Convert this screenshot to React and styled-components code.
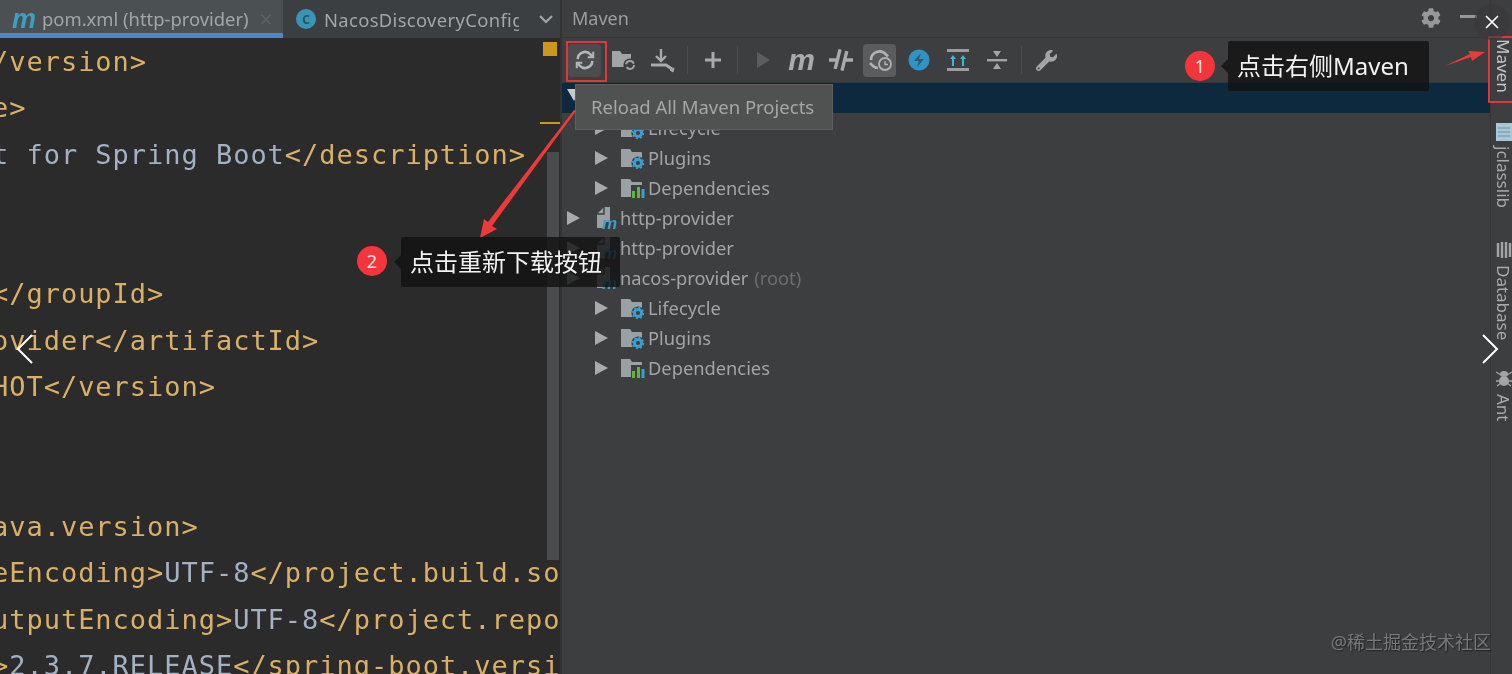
import React from 'react';
import styled, { createGlobalStyle } from 'styled-components';
import { FaCog, FaWrench } from 'react-icons/fa';

const GlobalStyle = createGlobalStyle`
  html, body { margin: 0; padding: 0; background: #3d3e40; overflow: hidden; }
`;

const Shot = styled.div`
  position: relative;
  display: flex;
  width: 1512px;
  height: 674px;
  overflow: hidden;
  font-family: "Noto Sans", "Noto Sans CJK SC", sans-serif;
`;

/* left side: editor */
const Editor = styled.div`
  display: flex;
  flex-direction: column;
  width: 560px;
  flex-shrink: 0;
  background: #2b2b2b;
  border-right: 2px solid #333436;
  filter: blur(0.6px);
`;

const TabBar = styled.div`
  display: flex;
  align-items: center;
  height: 38px;
  flex-shrink: 0;
  background: #3c3f41;
`;

const Tab = styled.div`
  display: flex;
  align-items: center;
  height: 38px;
  box-sizing: border-box;
  width: ${(p) => p.$width}px;
  padding-left: ${(p) => p.$pad}px;
  gap: 8px;
  overflow: hidden;
  white-space: nowrap;
  color: #a3a6a8;
  font-size: 18.4px;
  background: ${(p) => (p.$active ? '#4b5052' : 'transparent')};
  border-bottom: ${(p) => (p.$active ? '5px solid #4a88c7' : 'none')};
  padding-top: ${(p) => (p.$active ? '4px' : '0')};
`;

const TabLogo = styled.span`
  width: 22px;
  color: #3a9fc0;
  font-size: 27px;
  line-height: 20px;
  font-weight: 700;
  font-style: italic;
  font-family: "Liberation Sans", sans-serif;
`;

const TabClose = styled.span`
  margin-left: 3px;
  color: #5d6163;
  font-size: 23px;
`;

const ClassBadge = styled.span`
  display: flex;
  align-items: center;
  justify-content: center;
  width: 20px;
  height: 20px;
  border-radius: 50%;
  background: #3a95b5;
  color: #24566a;
  font-size: 12px;
  font-weight: 700;
  flex-shrink: 0;
`;

const TabName = styled.span`
  width: 195px;
  overflow: hidden;
  letter-spacing: 0.35px;
`;

const CodeArea = styled.div`
  position: relative;
  flex: 1;
  overflow: hidden;
  padding-top: 0.5px;
`;

const CodeLine = styled.div`
  height: 46.5px;
  line-height: 46.5px;
  margin-left: -8px;
  white-space: pre;
  font-family: "DejaVu Sans Mono", monospace;
  font-size: 27px;
  letter-spacing: 0.97px;
  color: #d9b066;
`;

const Plain = styled.span`
  color: #a3b1c2;
`;

const Marker = styled.div`
  position: absolute;
  left: 543px;
  top: 4px;
  width: 14px;
  height: 14px;
  background: #c9981c;
`;

const MarkerLine = styled.div`
  position: absolute;
  left: 540px;
  top: 84px;
  width: 20px;
  height: 2px;
  background: #c9981c;
`;

const ScrollThumb = styled.div`
  position: absolute;
  left: 547px;
  top: 114px;
  width: 12px;
  height: 408px;
  background: #4a4b4c;
`;

/* middle: maven tool window */
const MavenPanel = styled.div`
  flex: 1;
  display: flex;
  flex-direction: column;
  background: #3d3e40;
  filter: blur(0.6px);
`;

const PanelHeader = styled.div`
  display: flex;
  align-items: center;
  justify-content: space-between;
  height: 38px;
  padding: 0 13px 2px 10px;
  box-sizing: border-box;
  border-bottom: 1px solid #353638;
  color: #9c9ea0;
  font-size: 18px;
`;

const HeaderActions = styled.div`
  display: flex;
  align-items: center;
  gap: 19px;
  color: #96989a;
`;

const MinLine = styled.div`
  width: 17px;
  height: 3px;
  background: #96989a;
  margin-top: -2px;
`;

const Toolbar = styled.div`
  display: flex;
  align-items: center;
  height: 44px;
  padding-left: 6px;
  border-bottom: 1px solid #353638;
`;

const ToolButton = styled.div`
  display: flex;
  align-items: center;
  justify-content: center;
  width: 33px;
  height: 33px;
  margin-right: 6px;
  border-radius: 4px;
  color: #a2a4a6;
  background: ${(p) => (p.$on ? '#5a5c5e' : p.$hover ? '#4a4c4e' : 'transparent')};
`;

const ToolSep = styled.div`
  width: 1px;
  height: 28px;
  margin: 0 8px 0 2px;
  background: #4a4b4d;
`;

const LetterM = styled.span`
  font-family: "Liberation Sans", sans-serif;
  font-weight: 700;
  font-style: italic;
  font-size: 30px;
  line-height: 26px;
  color: #a8aaac;
`;

const Tree = styled.div`
  display: flex;
  flex-direction: column;
`;

const TreeRow = styled.div`
  display: flex;
  align-items: center;
  box-sizing: border-box;
  height: 30px;
  padding-left: ${(p) => (p.$depth === 2 ? 33 : 5)}px;
  padding-bottom: 1px;
  background: ${(p) => (p.$selected ? '#0d293e' : 'transparent')};
  color: #a2a4a6;
  font-size: 18.3px;
  white-space: nowrap;
`;

const Caret = styled.span`
  width: 0;
  height: 0;
  margin-right: ${(p) => (p.$depth === 2 ? 12 : 15)}px;
  border-top: 7px solid transparent;
  border-bottom: 7px solid transparent;
  border-left: 13px solid #a8aaac;
`;

const CaretDown = styled(Caret)`
  border-left: 7px solid transparent;
  border-right: 7px solid transparent;
  border-top: 12px solid #c8cacc;
  border-bottom: 0;
  margin-top: -6px;
`;

const RowIcon = styled.svg`
  flex-shrink: 0;
  margin-right: 3px;
`;

const Muted = styled.span`
  color: #6b6d6f;
  margin-left: 6px;
`;

/* right side: tool stripe */
const Stripe = styled.div`
  width: 21px;
  box-sizing: content-box;
  flex-shrink: 0;
  display: flex;
  flex-direction: column;
  align-items: center;
  border-left: 1px solid #353638;
  background: #3d3e40;
  color: #a8aaac;
  font-size: 17px;
  padding: 39px 0 0 2px;
  margin-right: -2px;
  filter: blur(0.5px);
`;

const StripeLabel = styled.span`
  writing-mode: vertical-rl;
  line-height: 21px;
  margin-top: ${(p) => p.$top || 0}px;
  color: ${(p) => (p.$active ? '#c4c6c8' : 'inherit')};
`;

const StripeIcon = styled.svg`
  margin-top: ${(p) => p.$top || 0}px;
  flex-shrink: 0;
`;

/* annotations lying over the screenshot */
const RedBox = styled.div`
  position: absolute;
  box-sizing: border-box;
  left: ${(p) => p.$x}px;
  top: ${(p) => p.$y}px;
  width: ${(p) => p.$w}px;
  height: ${(p) => p.$h}px;
  border: 2px solid #e2373a;
  border-radius: 1px;
`;

const Tooltip = styled.div`
  position: absolute;
  left: 575px;
  top: 84px;
  width: 258px;
  height: 46px;
  box-sizing: border-box;
  display: flex;
  align-items: center;
  padding: 0 0 2px 15px;
  background: #505251;
  border: 1px solid #5e605f;
  color: #a5a7a6;
  font-size: 18.5px;
  white-space: nowrap;
  filter: blur(0.5px);
`;

const Callout = styled.div`
  position: absolute;
  left: ${(p) => p.$x}px;
  top: ${(p) => p.$y}px;
  width: ${(p) => p.$w}px;
  height: ${(p) => p.$h}px;
  box-sizing: border-box;
  display: flex;
  align-items: center;
  padding: 0 0 3px 9px;
  background: rgba(18, 18, 18, 0.82);
  border-radius: 2px;
  color: #f2f2f2;
  font-size: 24px;
  white-space: nowrap;
  filter: blur(0.4px);
  &::before {
    content: '';
    position: absolute;
    left: -7px;
    top: 50%;
    margin-top: -7px;
    border-top: 7px solid transparent;
    border-bottom: 7px solid transparent;
    border-right: 7px solid rgba(18, 18, 18, 0.82);
  }
`;

const Step = styled.div`
  position: absolute;
  left: ${(p) => p.$x}px;
  top: ${(p) => p.$y}px;
  width: 30px;
  height: 30px;
  border-radius: 50%;
  background: #f5353b;
  color: #f6e6e6;
  font-size: 18px;
  display: flex;
  align-items: center;
  justify-content: center;
  font-family: "Noto Sans", sans-serif;
`;

const Arrows = styled.svg`
  position: absolute;
  left: 0;
  top: 0;
  pointer-events: none;
`;

const CloseDot = styled.div`
  position: absolute;
  left: 1474px;
  top: 4px;
  width: 36px;
  height: 36px;
  border-radius: 50%;
  background: rgba(56, 56, 58, 0.6);
  display: flex;
  align-items: center;
  justify-content: center;
`;

const Chevron = styled.svg`
  position: absolute;
  left: ${(p) => p.$x}px;
  top: 334px;
`;

const Watermark = styled.div`
  position: absolute;
  right: 21px;
  top: 630px;
  color: #777879;
  font-size: 18px;
  line-height: 24px;
  white-space: nowrap;
  text-shadow: 1px 1px 1px rgba(0, 0, 0, 0.45);
  filter: blur(0.3px);
`;

const FolderBody = ({ fill = '#9aa0a4' }) => (
  <path d="M1 3h9l2 3h9a1 1 0 0 1 1 1v13a1 1 0 0 1-1 1H1z" fill={fill} />
);

const FolderGear = () => (
  <RowIcon width="25" height="24" viewBox="0 0 25 24">
    <FolderBody />
    <circle cx="18" cy="17" r="6.6" fill="#3d3e40" />
    <circle cx="18" cy="17" r="3.6" fill="none" stroke="#3a9fd0" strokeWidth="3" />
    <circle cx="18" cy="17" r="5.4" fill="none" stroke="#3a9fd0" strokeWidth="1.6" strokeDasharray="2 2.2" />
  </RowIcon>
);

const FolderDeps = () => (
  <RowIcon width="25" height="24" viewBox="0 0 25 24">
    <FolderBody />
    <rect x="11" y="9" width="14" height="15" fill="#3d3e40" />
    <rect x="12" y="15" width="3" height="7" fill="#62b543" />
    <rect x="17" y="11" width="3" height="11" fill="#62b543" />
    <rect x="21.5" y="13" width="3" height="9" fill="#3a9fd0" />
  </RowIcon>
);

const ModuleIcon = () => (
  <RowIcon width="22" height="26" viewBox="0 0 22 26">
    <path d="M2 9l7-7h6v15H9v6H2z" fill="#9aa0a4" />
    <path d="M9 2v7H2" fill="none" stroke="#3d3e40" strokeWidth="1.4" />
    <text x="7" y="24" fontFamily="Liberation Sans" fontWeight="700" fontStyle="italic" fontSize="17" fill="#3a9fc0">m</text>
  </RowIcon>
);

const ReloadIcon = () => (
  <svg width="22" height="22" viewBox="0 0 24 24" fill="none" stroke="#b4b6b8" strokeWidth="2.8">
    <path d="M4 11a8 8 0 0 1 14-5l2 2" />
    <path d="M20 13a8 8 0 0 1-14 5l-2-2" />
    <path d="M21 3v6h-6M3 21v-6h6" strokeWidth="2.2" />
  </svg>
);

const FolderReload = () => (
  <svg width="26" height="24" viewBox="0 0 26 24">
    <path d="M1 3h8l2 3h9v13H1z" fill="#a2a4a6" />
    <circle cx="19" cy="17" r="6.6" fill="#3d3e40" />
    <circle cx="19" cy="17" r="4" fill="none" stroke="#a2a4a6" strokeWidth="2" strokeDasharray="10 3" />
  </svg>
);

const DownloadIcon = () => (
  <svg width="26" height="26" viewBox="0 0 26 26" fill="none" stroke="#a8aaac" strokeWidth="2.4">
    <path d="M11 2v10M6 9l5 5 5-5" />
    <path d="M1 18h15l6 4" strokeWidth="3" />
    <path d="M20 23l4-2-1 4z" fill="#a8aaac" strokeWidth="1" />
  </svg>
);

const PlusIcon = () => (
  <svg width="20" height="20" viewBox="0 0 20 20" stroke="#a8aaac" strokeWidth="3">
    <path d="M10 2v16M2 10h16" />
  </svg>
);

const PlayIcon = () => (
  <svg width="20" height="20" viewBox="0 0 20 20">
    <path d="M4 2l13 8-13 8z" fill="#5b5d5f" />
  </svg>
);

const SkipIcon = () => (
  <svg width="26" height="26" viewBox="0 0 26 26" stroke="#a8aaac" fill="none">
    <path d="M1 13h7M18 13h7" strokeWidth="3.4" />
    <path d="M9.5 3v20M16.5 3v20" strokeWidth="3.4" transform="rotate(14 13 13)" />
  </svg>
);

const OfflineIcon = () => (
  <svg width="28" height="28" viewBox="0 0 28 28" fill="none">
    <path d="M5 14a8.5 8.5 0 0 1 15-5.5l2 2" stroke="#b0b2b4" strokeWidth="2.6" />
    <path d="M12 22a8 8 0 0 1-6-3l-2-2" stroke="#b0b2b4" strokeWidth="2.6" />
    <circle cx="19" cy="18" r="6" stroke="#b0b2b4" strokeWidth="1.8" fill="#5a5c5e" />
    <path d="M19 15v3.5h3" stroke="#b0b2b4" strokeWidth="1.4" />
  </svg>
);

const BoltIcon = () => (
  <svg width="24" height="24" viewBox="0 0 24 24">
    <circle cx="12" cy="12" r="10.5" fill="#2f94c4" />
    <path d="M14 5l-7 8h5l-2 6 7-8h-5z" fill="#2a5a75" />
  </svg>
);

const ExpandIcon = () => (
  <svg width="24" height="24" viewBox="0 0 24 24">
    <rect x="1" y="1" width="22" height="3" fill="#9a9c9e" />
    <rect x="1" y="20" width="22" height="3" fill="#9a9c9e" />
    <path d="M7 7l3 4H8v7H6v-7H4zM17 7l3 4h-2v7h-2v-7h-2z" fill="#3fb6d6" />
  </svg>
);

const CollapseIcon = () => (
  <svg width="22" height="24" viewBox="0 0 22 24" fill="#a2a4a6">
    <rect x="1" y="11" width="20" height="2.4" />
    <path d="M11 9L7 3h8zM11 15l4 6H7z" />
  </svg>
);

const StripeFile = () => (
  <StripeIcon $top={30} width="16" height="18" viewBox="0 0 16 18">
    <rect width="16" height="18" fill="#a9c6d6" />
    <path d="M2 5h12M2 9h12M2 13h12" stroke="#7da2b6" strokeWidth="1.5" />
  </StripeIcon>
);

const StripeDb = () => (
  <StripeIcon $top={33} width="16" height="18" viewBox="0 0 16 18" fill="none" stroke="#a2a4a6" strokeWidth="2.4">
    <path d="M2 2v14M6 1v16M10 1v16M14 2v14" />
  </StripeIcon>
);

const StripeAnt = () => (
  <StripeIcon $top={29} width="16" height="18" viewBox="0 0 16 18" fill="#a2a4a6">
    <ellipse cx="8" cy="5" rx="4" ry="3" />
    <ellipse cx="8" cy="12" rx="5" ry="5" />
    <path d="M0 3l5 3M16 3l-5 3M0 12h16M1 17l4-3M15 17l-4-3" stroke="#a2a4a6" strokeWidth="1.4" />
  </StripeIcon>
);

const treeRows = [
  { depth: 2, icon: 'gear', label: 'Lifecycle' },
  { depth: 2, icon: 'gear', label: 'Plugins' },
  { depth: 2, icon: 'deps', label: 'Dependencies' },
  { depth: 1, icon: 'module', label: 'http-provider' },
  { depth: 1, icon: 'module', label: 'http-provider' },
  { depth: 1, icon: 'module', label: 'nacos-provider', note: '(root)', open: true },
  { depth: 2, icon: 'gear', label: 'Lifecycle' },
  { depth: 2, icon: 'gear', label: 'Plugins' },
  { depth: 2, icon: 'deps', label: 'Dependencies' },
];

const rowIcons = { gear: FolderGear, deps: FolderDeps, module: ModuleIcon };

const App = () => {
  return (
    <Shot>
      <GlobalStyle />
      <Editor>
        <TabBar>
          <Tab $active $width={283} $pad={12}>
            <TabLogo>m</TabLogo>
            <span>pom.xml (http-provider)</span>
            <TabClose>×</TabClose>
          </Tab>
          <Tab $width={277} $pad={13}>
            <ClassBadge>C</ClassBadge>
            <TabName>NacosDiscoveryConfig</TabName>
            <svg width="18" height="18" viewBox="0 0 18 18" fill="none" stroke="#a3a6a8" strokeWidth="2.2" style={{ marginLeft: 10 }}>
              <path d="M3 6l6 6 6-6" />
            </svg>
          </Tab>
        </TabBar>
        <CodeArea>
          <CodeLine>/version&gt;</CodeLine>
          <CodeLine>e&gt;</CodeLine>
          <CodeLine><Plain>t for Spring Boot</Plain>&lt;/description&gt;</CodeLine>
          <CodeLine> </CodeLine>
          <CodeLine> </CodeLine>
          <CodeLine>&lt;/groupId&gt;</CodeLine>
          <CodeLine>ovider&lt;/artifactId&gt;</CodeLine>
          <CodeLine>HOT&lt;/version&gt;</CodeLine>
          <CodeLine> </CodeLine>
          <CodeLine> </CodeLine>
          <CodeLine>ava.version&gt;</CodeLine>
          <CodeLine>eEncoding&gt;<Plain>UTF-8</Plain>&lt;/project.build.so</CodeLine>
          <CodeLine>utputEncoding&gt;<Plain>UTF-8</Plain>&lt;/project.repo</CodeLine>
          <CodeLine>&gt;<Plain>2.3.7.RELEASE</Plain>&lt;/spring-boot.versi</CodeLine>
          <Marker />
          <MarkerLine />
          <ScrollThumb />
        </CodeArea>
      </Editor>

      <MavenPanel>
        <PanelHeader>
          <span>Maven</span>
          <HeaderActions>
            <FaCog size={20} />
            <MinLine />
          </HeaderActions>
        </PanelHeader>
        <Toolbar>
          <ToolButton $hover><ReloadIcon /></ToolButton>
          <ToolButton><FolderReload /></ToolButton>
          <ToolButton><DownloadIcon /></ToolButton>
          <ToolSep />
          <ToolButton><PlusIcon /></ToolButton>
          <ToolSep />
          <ToolButton><PlayIcon /></ToolButton>
          <ToolButton><LetterM>m</LetterM></ToolButton>
          <ToolButton><SkipIcon /></ToolButton>
          <ToolButton $on><OfflineIcon /></ToolButton>
          <ToolButton><BoltIcon /></ToolButton>
          <ToolButton><ExpandIcon /></ToolButton>
          <ToolButton><CollapseIcon /></ToolButton>
          <ToolSep />
          <ToolButton><FaWrench size={21} /></ToolButton>
        </Toolbar>
        <Tree>
          <TreeRow $selected $depth={1}><CaretDown $depth={1} /></TreeRow>
          {treeRows.map((row, i) => {
            const RowGlyph = rowIcons[row.icon];
            return (
              <TreeRow key={i} $depth={row.depth}>
                <Caret $depth={row.depth} />
                <RowGlyph />
                {row.label}
                {row.note && <Muted>{row.note}</Muted>}
              </TreeRow>
            );
          })}
        </Tree>
      </MavenPanel>

      <Stripe>
        <StripeLabel $active>Maven</StripeLabel>
        <StripeFile />
        <StripeLabel $top={5}>jclasslib</StripeLabel>
        <StripeDb />
        <StripeLabel $top={6}>Database</StripeLabel>
        <StripeAnt />
        <StripeLabel $top={7}>Ant</StripeLabel>
      </Stripe>

      <Tooltip>Reload All Maven Projects</Tooltip>
      <RedBox $x={566} $y={41} $w={41} $h={41} />
      <RedBox $x={1488} $y={36} $w={28} $h={67} />

      <Arrows width="1512" height="674" viewBox="0 0 1512 674">
        <path d="M576 111L492 226L497 229L480 238L484 219L488 222L574 110z" fill="#ec3a3a" />
        <path d="M1445 66L1471 57L1472 61L1485 52L1468 51L1470 54z" fill="#ec3a3a" />
      </Arrows>

      <Step $x={357} $y={246}>2</Step>
      <Callout $x={401} $y={237} $w={219} $h={50}>点击重新下载按钮</Callout>
      <Step $x={1185} $y={51}>1</Step>
      <Callout $x={1228} $y={41} $w={201} $h={50}>点击右侧Maven</Callout>

      <CloseDot>
        <svg width="16" height="16" viewBox="0 0 16 16" stroke="#fff" strokeWidth="1.7">
          <path d="M2 2l12 12M14 2L2 14" />
        </svg>
      </CloseDot>
      <Chevron $x={15} width="20" height="30" viewBox="0 0 20 30" fill="none" stroke="#fff" strokeWidth="2">
        <path d="M17 1L3 15l14 14" />
      </Chevron>
      <Chevron $x={1480} width="20" height="30" viewBox="0 0 20 30" fill="none" stroke="#fff" strokeWidth="2">
        <path d="M3 1l14 14L3 29" />
      </Chevron>
      <Watermark>@稀土掘金技术社区</Watermark>
    </Shot>
  );
};

export default App;
